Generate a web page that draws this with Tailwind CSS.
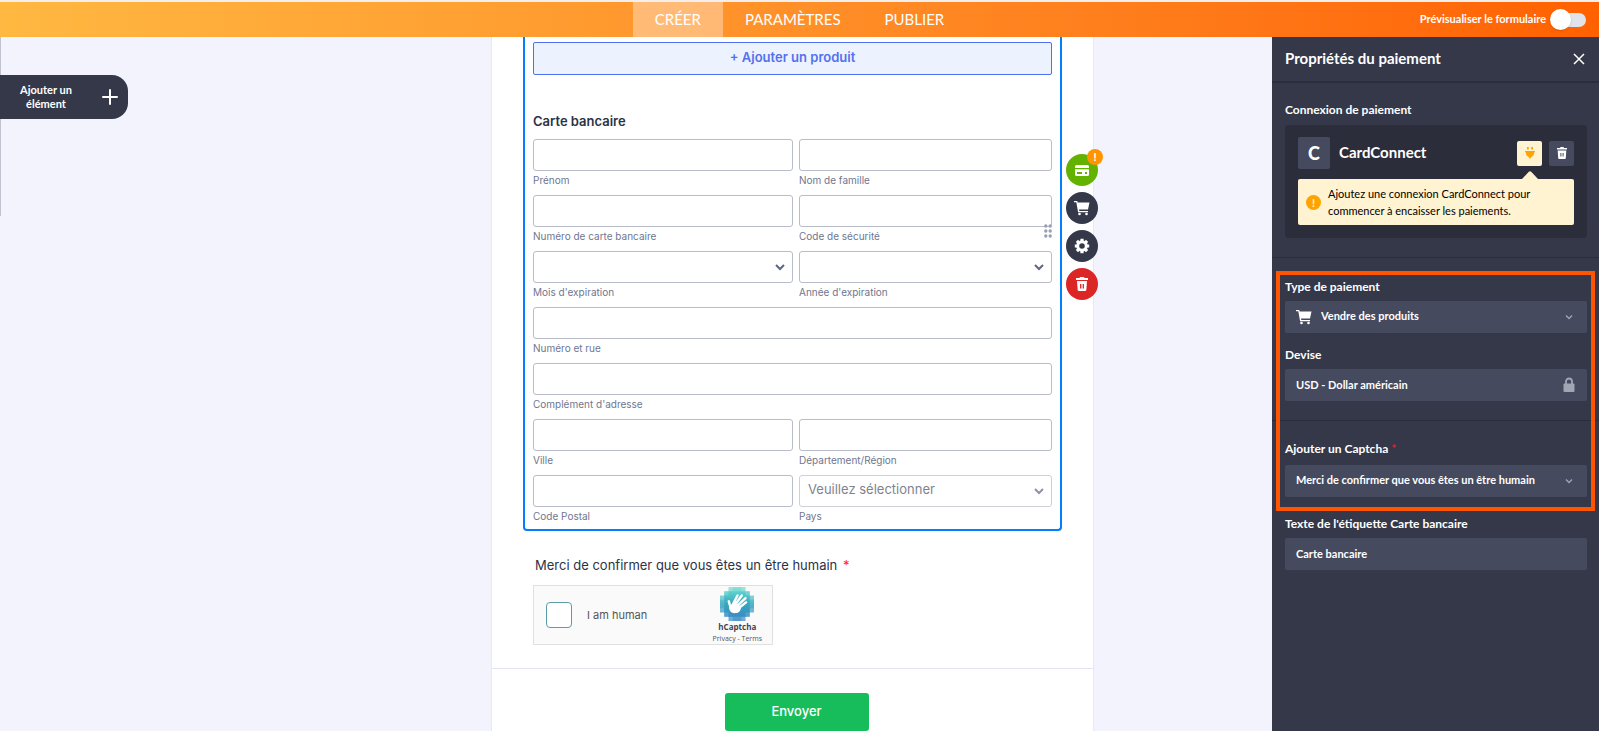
<!DOCTYPE html>
<html lang="fr">
<head>
    <meta charset="UTF-8">
    <meta name="viewport" content="width=device-width, initial-scale=1.0">
    <title>Créateur de formulaire</title>
    <script src="https://cdn.jsdelivr.net/npm/@tailwindcss/browser@4"></script>
</head>
<body class="h-screen flex flex-col overflow-hidden bg-[#f3f3fe] font-['Lato',sans-serif] text-[#2c3345]">

    <!-- Top bar -->
    <header class="relative z-10 shrink-0 h-[37px] border-t-2 border-[#f4efec] bg-linear-to-r from-[#ffb841] to-[#ff6100] flex items-center text-white">
        <div class="flex-1"></div>
        <nav class="flex self-stretch text-[15px]">
            <a href="#" class="flex items-center px-[22px] bg-white/35">CRÉER</a>
            <a href="#" class="flex items-center px-[22px]">PARAMÈTRES</a>
            <a href="#" class="flex items-center px-[22px]">PUBLIER</a>
        </nav>
        <div class="flex-1 flex justify-end">
            <label class="mr-[13px] flex items-center gap-1 text-[11px] font-bold cursor-pointer">
                Prévisualiser le formulaire
                <span class="relative flex items-center w-9 h-[22px]">
                    <input type="checkbox" class="peer appearance-none ml-auto w-[26px] h-3.5 rounded-full bg-[#e2e3ea]">
                    <span class="absolute left-0 size-[21px] rounded-full bg-white shadow peer-checked:left-4"></span>
                </span>
            </label>
        </div>
    </header>

    <div class="flex-1 min-h-0 flex">

        <!-- Left gutter -->
        <div class="w-[313px] shrink-0">
            <div class="h-[179px] border-l border-[#c0c2d0] pt-[38px]">
                <button type="button" class="-ml-px w-32 h-11 pl-[15px] pr-2.5 flex items-center justify-between rounded-r-2xl bg-[#343849] text-white text-[11px] leading-3.5 font-bold">
                    <span class="w-[62px] text-center">Ajouter un élément</span>
                    <svg class="size-4" viewBox="0 0 16 16" fill="none" stroke="currentColor" stroke-width="2" stroke-linecap="round"><path d="M8 1v14M1 8h14"/></svg>
                </button>
            </div>
        </div>

        <!-- Form canvas -->
        <main class="flex-1 flex justify-center font-['Inter',sans-serif]">
            <form class="w-[603px] bg-white border-x border-[#e8e9f6]">
                <div class="relative mx-[31px] border-2 border-t-0 border-[#0080ff] rounded-b px-2 pt-[5px] pb-1">
                    <button type="button" class="w-full h-[33px] pb-0.5 border border-[#4f71ed] rounded-xs bg-[#edf2ff] text-[#5271ee] text-[13px] font-semibold">+ Ajouter un produit</button>

                    <h2 class="mt-9 mb-2 text-[13px] leading-5 font-semibold">Carte bancaire</h2>

                    <div class="grid grid-cols-[260fr_253fr] gap-1.5 text-[10px] text-[#6f7690]">
                        <label class="flex flex-col leading-[18px]">
                            <input type="text" class="h-8 border border-[#b8bdc9] rounded-[3px] bg-white px-2 text-[13px]">
                            Prénom
                        </label>
                        <label class="flex flex-col leading-[18px]">
                            <input type="text" class="h-8 border border-[#b8bdc9] rounded-[3px] bg-white px-2 text-[13px]">
                            Nom de famille
                        </label>
                        <label class="flex flex-col leading-[18px]">
                            <input type="text" class="h-8 border border-[#b8bdc9] rounded-[3px] bg-white px-2 text-[13px]">
                            Numéro de carte bancaire
                        </label>
                        <label class="relative flex flex-col leading-[18px]">
                            <input type="text" class="h-8 border border-[#b8bdc9] rounded-[3px] bg-white px-2 text-[13px]">
                            Code de sécurité
                            <svg class="absolute right-0 top-[29px] w-2 h-3.5" viewBox="0 0 8 14" fill="#9a9fb5"><circle cx="1.8" cy="2" r="1.7"/><circle cx="6.2" cy="2" r="1.7"/><circle cx="1.8" cy="7" r="1.7"/><circle cx="6.2" cy="7" r="1.7"/><circle cx="1.8" cy="12" r="1.7"/><circle cx="6.2" cy="12" r="1.7"/></svg>
                        </label>
                        <label class="relative flex flex-col leading-[18px]">
                            <select class="appearance-none h-8 border border-[#b8bdc9] rounded-[3px] bg-white px-2 text-[13px]"><option></option></select>
                            Mois d'expiration
                            <svg class="absolute right-2 top-[11px] size-2.5" viewBox="0 0 10 10" fill="none" stroke="#5e6680" stroke-width="2"><path d="M1 3l4 4 4-4"/></svg>
                        </label>
                        <label class="relative flex flex-col leading-[18px]">
                            <select class="appearance-none h-8 border border-[#b8bdc9] rounded-[3px] bg-white px-2 text-[13px]"><option></option></select>
                            Année d'expiration
                            <svg class="absolute right-2 top-[11px] size-2.5" viewBox="0 0 10 10" fill="none" stroke="#5e6680" stroke-width="2"><path d="M1 3l4 4 4-4"/></svg>
                        </label>
                        <label class="col-span-2 flex flex-col leading-[18px]">
                            <input type="text" class="h-8 border border-[#b8bdc9] rounded-[3px] bg-white px-2 text-[13px]">
                            Numéro et rue
                        </label>
                        <label class="col-span-2 flex flex-col leading-[18px]">
                            <input type="text" class="h-8 border border-[#b8bdc9] rounded-[3px] bg-white px-2 text-[13px]">
                            Complément d'adresse
                        </label>
                        <label class="flex flex-col leading-[18px]">
                            <input type="text" class="h-8 border border-[#b8bdc9] rounded-[3px] bg-white px-2 text-[13px]">
                            Ville
                        </label>
                        <label class="flex flex-col leading-[18px]">
                            <input type="text" class="h-8 border border-[#b8bdc9] rounded-[3px] bg-white px-2 text-[13px]">
                            Département/Région
                        </label>
                        <label class="flex flex-col leading-[18px]">
                            <input type="text" class="h-8 border border-[#b8bdc9] rounded-[3px] bg-white px-2 text-[13px]">
                            Code Postal
                        </label>
                        <label class="relative flex flex-col leading-[18px]">
                            <select class="appearance-none h-8 border border-[#cdd0d9] rounded-[3px] bg-white px-2 pb-1 text-[13px] text-[#80838e]"><option>Veuillez sélectionner</option></select>
                            Pays
                            <svg class="absolute right-2 top-[11px] size-2.5" viewBox="0 0 10 10" fill="none" stroke="#8e94a6" stroke-width="2"><path d="M1 3l4 4 4-4"/></svg>
                        </label>
                    </div>

                    <!-- Field actions -->
                    <div class="absolute left-full top-[117px] ml-1.5 flex flex-col gap-1.5 text-white">
                        <button type="button" aria-label="Paiement" class="relative size-8 rounded-full bg-[#64b200] flex items-center justify-center">
                            <svg class="size-4" viewBox="0 0 16 16"><path d="M2.500 3h11A1.500 1.500 0 0 1 15 4.500V6H1V4.500A1.500 1.500 0 0 1 2.500 3zM1 7.200h14v5.300a1.500 1.500 0 0 1-1.500 1.500h-11A1.500 1.500 0 0 1 1 12.500z" fill="#fff"/><path d="M3 11h5M11 11h2" stroke="#64b200" stroke-width="1.800"/></svg>
                            <span class="absolute -top-[5px] -right-[5px] size-4 rounded-full bg-[#ff9500] text-[11px] leading-4 font-semibold text-center">!</span>
                        </button>
                        <button type="button" aria-label="Produits" class="size-8 rounded-full bg-[#343849] flex items-center justify-center">
                            <svg class="size-4" viewBox="0 0 16 16" fill="#fff"><path d="M0 1h3.200l.5 1.500H15.500L14 9.500H5L5.300 11H14v1.300H4.100L2.300 2.300H0z"/><circle cx="5.500" cy="14" r="1.300"/><circle cx="12.500" cy="14" r="1.300"/></svg>
                        </button>
                        <button type="button" aria-label="Propriétés" class="size-8 rounded-full bg-[#343849] flex items-center justify-center">
                            <svg class="size-4" viewBox="0 0 16 16" fill="none" stroke="#fff"><circle cx="8" cy="8" r="4.300" stroke-width="3"/><path d="M8 .8v2.400M8 12.800v2.400M.8 8h2.400M12.800 8h2.400M2.900 2.900l1.700 1.700M11.400 11.400l1.700 1.700M2.900 13.100l1.700-1.700M11.400 4.600l1.700-1.700" stroke-width="3.200"/></svg>
                        </button>
                        <button type="button" aria-label="Supprimer" class="size-8 rounded-full bg-[#dc2626] flex items-center justify-center">
                            <svg class="size-4" viewBox="0 0 16 16" fill="#fff"><path d="M2 2h3.500l.5-1h4l.5 1H14v2H2zM3 5h10l-.7 9a1.200 1.200 0 0 1-1.200 1H4.900a1.200 1.200 0 0 1-1.200-1z"/><path d="M6.700 8v4.500M9.300 8v4.500" stroke="#dc2626" stroke-width="1.300"/></svg>
                        </button>
                    </div>
                </div>

                <!-- Captcha -->
                <div class="mt-6 ml-[41px]">
                    <p class="pl-0.5 text-[13px] leading-5">Merci de confirmer que vous êtes un être humain <span class="ml-0.5 text-[#ff1f1f]">*</span></p>
                    <div class="mt-2.5 w-60 h-[60px] flex items-center justify-between pl-3 pr-2.5 border border-[#e0e0e0] bg-[#fafafa]">
                        <label class="flex items-center gap-[15px] text-[11px] text-[#555]">
                            <input type="checkbox" class="appearance-none size-[26px] border border-[#5c9ca6] rounded-sm bg-white">
                            I am human
                        </label>
                        <div class="flex flex-col items-center font-['Open_Sans',sans-serif]">
                            <svg class="size-[34px]" viewBox="0 0 32 32">
                                <defs>
                                    <linearGradient id="hc" x1="0" y1="0" x2="0" y2="32" gradientUnits="userSpaceOnUse"><stop offset="0" stop-color="#6fe0cf"/><stop offset=".5" stop-color="#36a7bf"/><stop offset="1" stop-color="#3a85c6"/></linearGradient>
                                </defs>
                                <path fill="url(#hc)" opacity=".7" d="M8 0h16v4h4v4h4v16h-4v4h-4v4H8v-4H4v-4H0V8h4V4h4z"/>
                                <path fill="url(#hc)" opacity=".5" d="M12 0h8v4h8v8h4v8h-4v8h-8v4h-8v-4H4v-8H0v-8h4V4h8z"/>
                                <path fill="url(#hc)" d="M8 4h16v4h4v16h-4v4H8v-4H4V8h4z"/>
                                <path fill="none" stroke="#fff" stroke-width="2.300" stroke-linecap="round" d="M12.500 15.500l4-7.500M15 15.500l5.500-7.500M17 17l7-6.500M18 19.500l6.500-5M10 19.500L8.300 13.500"/>
                                <path fill="#fff" d="M11.300 15.800l2.700-2.300 5.500 5c.8 3-1.500 5.700-4.500 6-4.500.7-7-2.200-6.200-6.300z"/>
                            </svg>
                            <span class="text-[8px] leading-3 font-bold text-[#444250]">hCaptcha</span>
                            <span class="text-[7px] leading-[11px] text-[#555]"><a href="#">Privacy</a> - <a href="#">Terms</a></span>
                        </div>
                    </div>
                </div>

                <div class="mt-[23px] pt-6 pl-2 border-t border-[#e3e5f5] flex justify-center">
                    <button type="submit" class="w-36 h-[38px] rounded-[3px] bg-[#18bd5b] text-white text-[13px] font-medium">Envoyer</button>
                </div>
            </form>
        </main>

        <!-- Payment properties -->
        <aside class="w-[327px] shrink-0 bg-[#343849] text-white text-xs">
            <div class="h-[46px] pl-[13px] pr-3.5 flex items-center justify-between border-b-2 border-[#2b2d3b]">
                <h1 class="text-[15px] font-bold">Propriétés du paiement</h1>
                <button type="button" aria-label="Fermer"><svg class="size-3" viewBox="0 0 12 12" fill="none" stroke="currentColor" stroke-width="1.500"><path d="M1 1l10 10M11 1L1 11"/></svg></button>
            </div>

            <section class="pl-[13px] pr-3 pt-[19px] pb-[19px] border-b border-[#2b2d3b]">
                <h2 class="leading-4 font-bold">Connexion de paiement</h2>
                <div class="mt-[7px] rounded bg-[#2b2d3b] px-[13px] pt-3 pb-[13px]">
                    <div class="flex items-center">
                        <span class="size-8 rounded-xs bg-[#454a5f] flex items-center justify-center text-lg font-black">C</span>
                        <span class="ml-[9px] text-[15px] font-bold">CardConnect</span>
                        <button type="button" aria-label="Connecter" class="relative ml-auto size-[25px] rounded-xs bg-[#fff3d1] flex items-center justify-center">
                            <svg class="w-3 h-3.5" viewBox="0 0 12 14" fill="#ffa300"><path d="M3 1h1.800v2.500H3zM7.200 1H9v2.500H7.200zM1 5h10v1.300h-.8c0 2.500-1.200 4-2.700 4.500L6 13l-1.500-2.200C3 10.300 1.800 8.800 1.800 6.300H1z"/></svg>
                            <svg class="absolute top-[30px] w-4 h-2" viewBox="0 0 16 8" fill="#fff3d1"><path d="M0 8L6.800.8a1.700 1.700 0 0 1 2.400 0L16 8z"/></svg>
                        </button>
                        <button type="button" aria-label="Supprimer la connexion" class="ml-[7px] size-[25px] rounded-xs bg-[#454a5f] flex items-center justify-center">
                            <svg class="w-3 h-3.5" viewBox="0 0 12 14" fill="#fff"><path d="M1 2h3l.5-1h3L8 2h3v1.500H1zM1.700 4.500h8.600l-.5 7.700a1 1 0 0 1-1 .8H3.200a1 1 0 0 1-1-.8z"/><path d="M4.900 7v3.500M7.100 7v3.500" stroke="#454a5f"/></svg>
                        </button>
                    </div>
                    <div class="mt-2.5 h-[46px] px-2 rounded-xs bg-[#fff3d1] flex items-center gap-[7px] text-black text-[11px] leading-[17px]">
                        <span class="size-[15px] shrink-0 rounded-full bg-[#ffa300] text-[#fff3d1] text-[11px] leading-[15px] font-bold text-center">!</span>
                        <p>Ajoutez une connexion CardConnect pour commencer à encaisser les paiements.</p>
                    </div>
                </div>
            </section>

            <div class="relative font-bold">
                <!-- Highlight frame -->
                <div class="absolute z-10 inset-x-1 top-[13px] bottom-0 border-4 border-[#ff5400] pointer-events-none"></div>
                <div class="pl-[13px] pr-3 pt-[21px] pb-[19px] border-b border-[#2b2d3b]">
                    <label for="type" class="block leading-4">Type de paiement</label>
                    <div class="relative mt-1.5">
                        <select id="type" class="appearance-none w-full h-8 pl-9 pb-0.5 rounded-xs bg-[#454a5f] text-[11px]"><option>Vendre des produits</option></select>
                        <svg class="absolute left-[11px] top-2 size-4" viewBox="0 0 16 16" fill="#fff"><path d="M0 1h3.200l.5 1.500H15.500L14 9.500H5L5.300 11H14v1.300H4.100L2.300 2.300H0z"/><circle cx="5.500" cy="14" r="1.300"/><circle cx="12.500" cy="14" r="1.300"/></svg>
                        <svg class="absolute right-3.5 top-3 size-2" viewBox="0 0 8 8" fill="none" stroke="#9ea2b2" stroke-width="1.500"><path d="M1 2.500l3 3 3-3"/></svg>
                    </div>
                    <label for="currency" class="block mt-3.5 leading-4">Devise</label>
                    <div class="relative mt-1.5">
                        <select id="currency" class="appearance-none w-full h-8 pl-[11px] rounded-xs bg-[#454a5f] text-[11px]"><option>USD - Dollar américain</option></select>
                        <svg class="absolute right-3 top-2 w-3 h-4" viewBox="0 0 12 16"><rect x=".5" y="6.500" width="11" height="8.500" rx="1" fill="#a2a5b4"/><path d="M3 7V4.500a3 3 0 0 1 6 0V7" fill="none" stroke="#a2a5b4" stroke-width="1.800"/></svg>
                    </div>
                </div>
                <div class="pl-[13px] pr-3 pt-5 pb-3.5">
                    <label for="captcha" class="block leading-4">Ajouter un Captcha <span class="text-[#dc2626]">*</span></label>
                    <div class="relative mt-2">
                        <select id="captcha" class="appearance-none w-full h-8 pl-[11px] pb-0.5 rounded-xs bg-[#454a5f] text-[11px]"><option>Merci de confirmer que vous êtes un être humain</option></select>
                        <svg class="absolute right-3.5 top-3 size-2" viewBox="0 0 8 8" fill="none" stroke="#9ea2b2" stroke-width="1.500"><path d="M1 2.500l3 3 3-3"/></svg>
                    </div>
                </div>
            </div>

            <div class="pl-[13px] pr-3 pt-[5px] font-bold">
                <label for="label-text" class="block leading-4">Texte de l'étiquette Carte bancaire</label>
                <div class="mt-1.5">
                    <input id="label-text" type="text" value="Carte bancaire" class="w-full h-8 px-[11px] pb-0.5 rounded-xs bg-[#454a5f] text-[11px]">
                </div>
            </div>
        </aside>
    </div>
</body>
</html>
